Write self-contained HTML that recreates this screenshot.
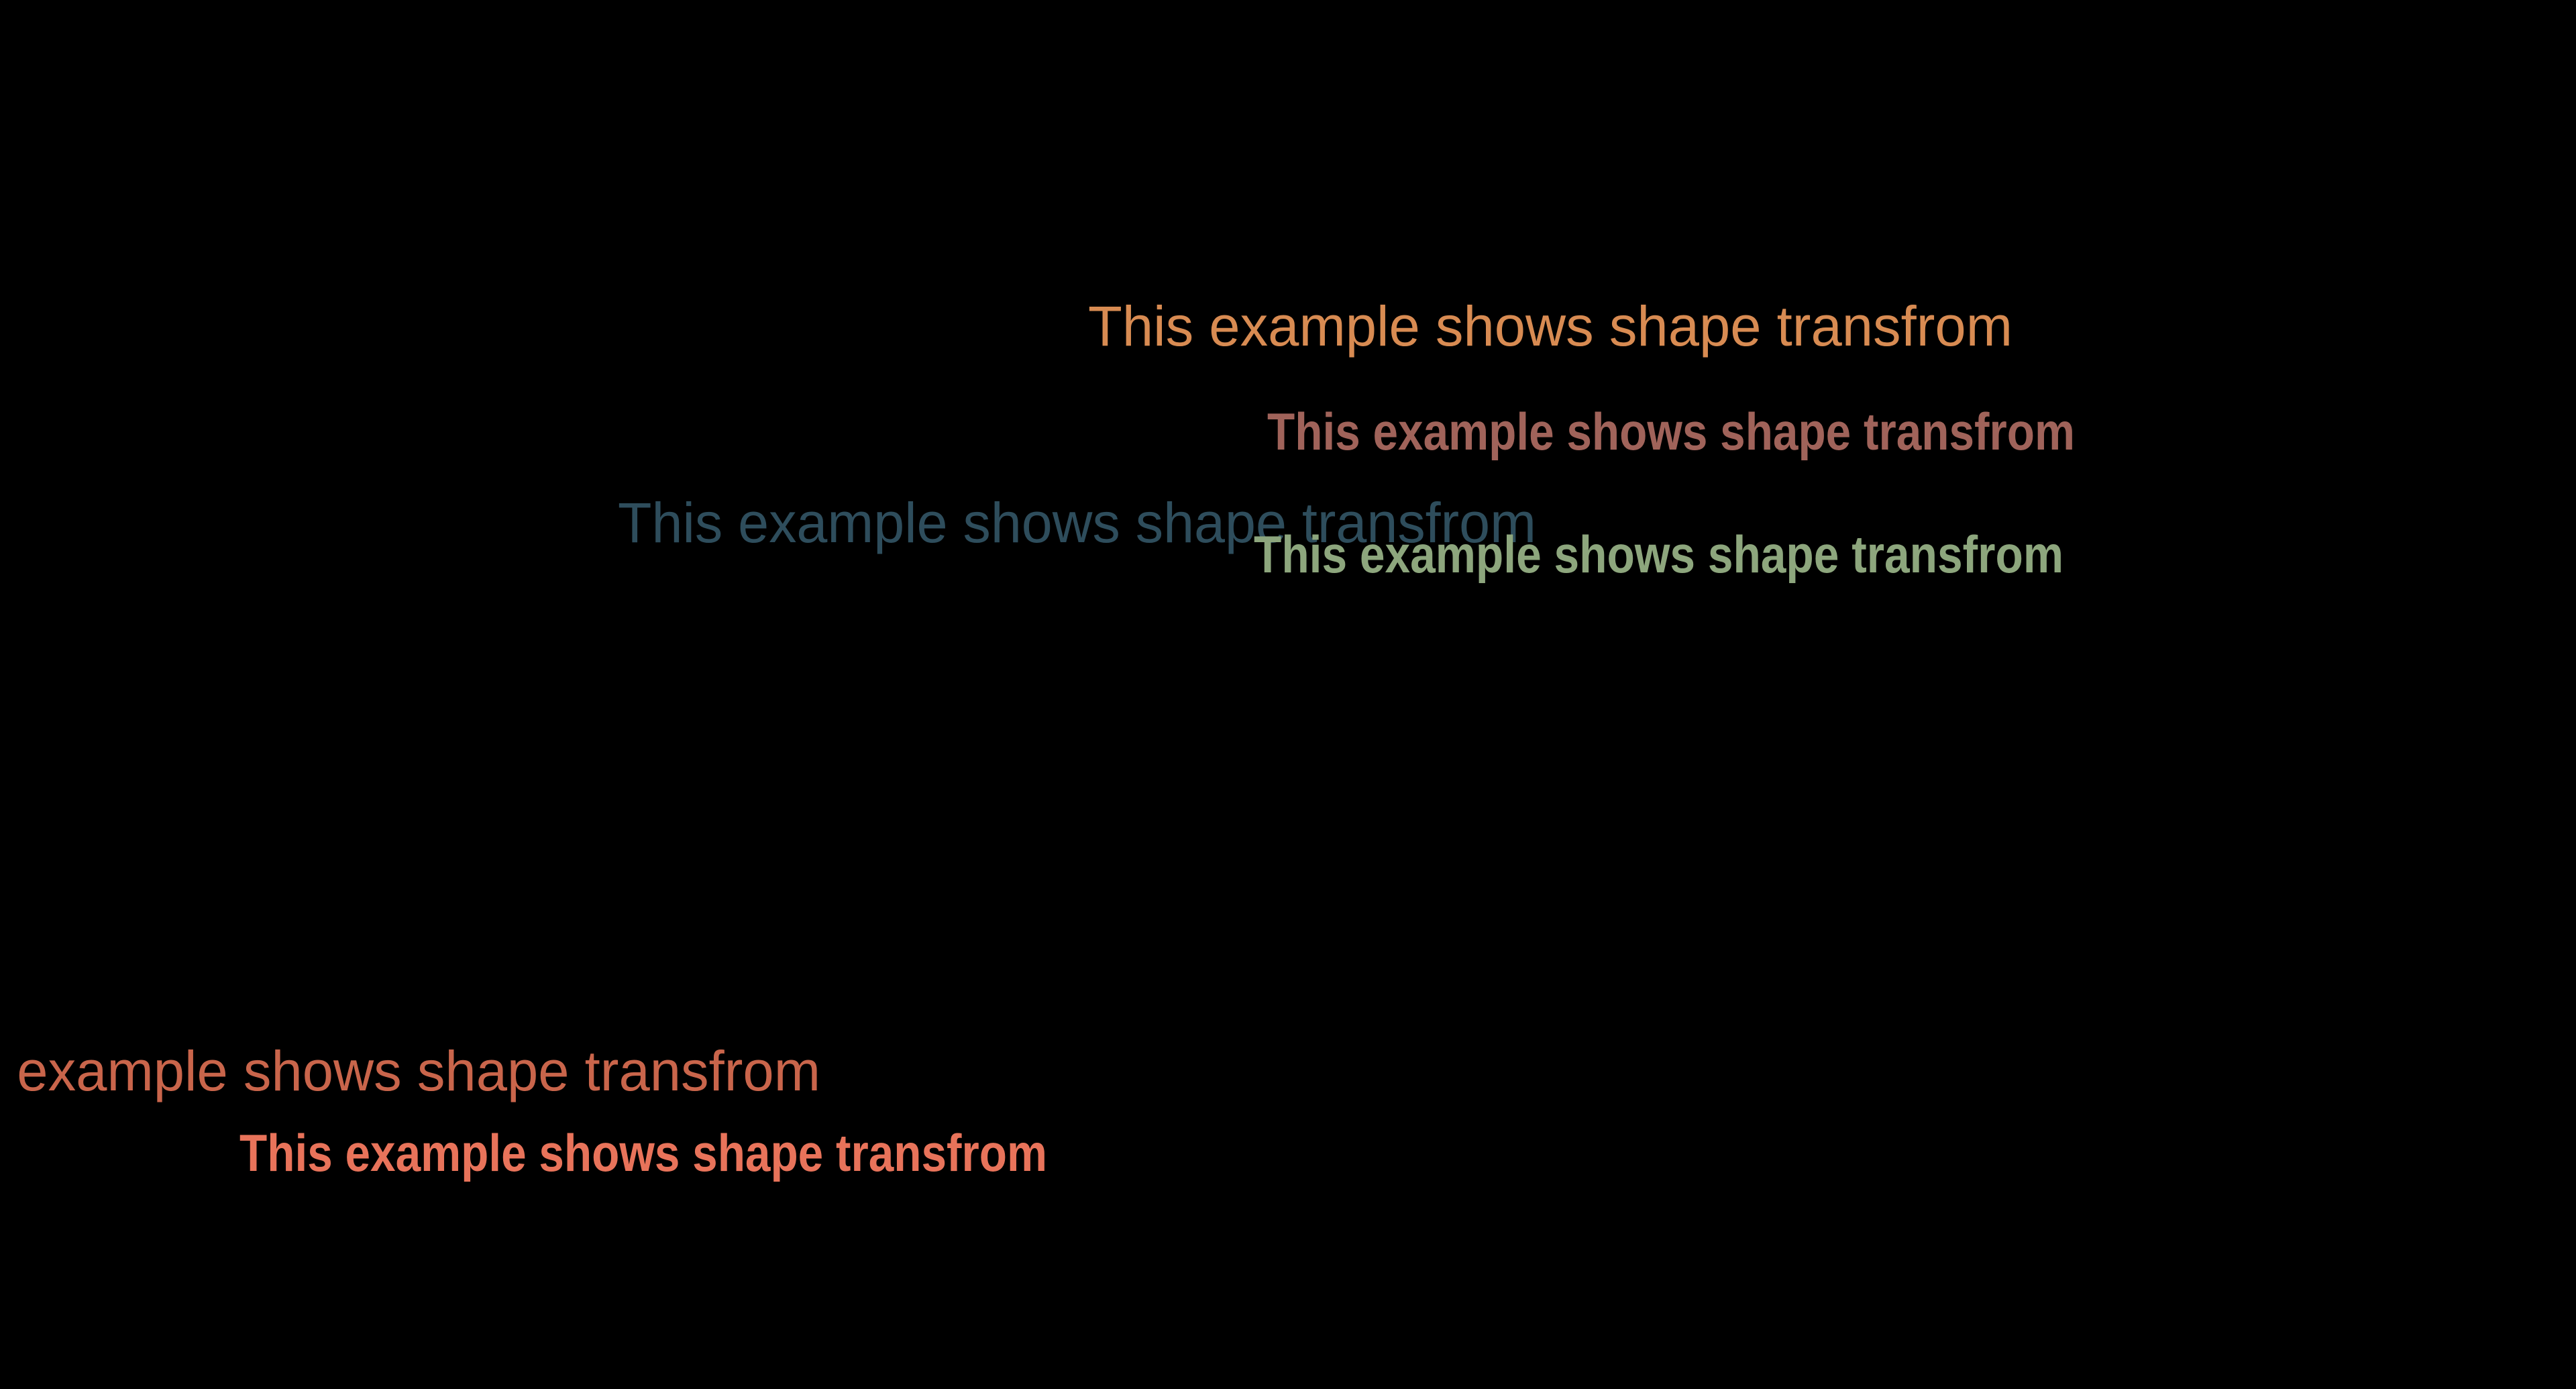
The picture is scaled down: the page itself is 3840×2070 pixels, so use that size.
<!DOCTYPE html>
<html><head><meta charset="utf-8"><style>
html,body{margin:0;padding:0;background:#000;width:3840px;height:2070px;overflow:hidden}
svg{display:block}
text{font-family:"Liberation Sans","DejaVu Sans",sans-serif}
</style></head><body>
<svg width="3840" height="2070" viewBox="0 0 3840 2070" xmlns="http://www.w3.org/2000/svg">
<rect width="3840" height="2070" fill="#000"/>
<text x="1622" y="515" font-size="84" fill="#d88b52" textLength="1378" lengthAdjust="spacingAndGlyphs">This example shows shape transfrom</text>
<text x="1889" y="670" font-size="78" font-weight="bold" fill="#a0635a" textLength="1204" lengthAdjust="spacingAndGlyphs">This example shows shape transfrom</text>
<text x="921" y="808" font-size="84" fill="#2e4d5c" textLength="1369" lengthAdjust="spacingAndGlyphs">This example shows shape transfrom</text>
<text x="1869" y="853" font-size="78" font-weight="bold" fill="#8da67d" textLength="1207" lengthAdjust="spacingAndGlyphs">This example shows shape transfrom</text>
<text x="-155" y="1625" font-size="84" fill="#c9654b" textLength="1378" lengthAdjust="spacingAndGlyphs">This example shows shape transfrom</text>
<text x="357" y="1745" font-size="78" font-weight="bold" fill="#e8735a" textLength="1204" lengthAdjust="spacingAndGlyphs">This example shows shape transfrom</text>
</svg>
</body></html>
